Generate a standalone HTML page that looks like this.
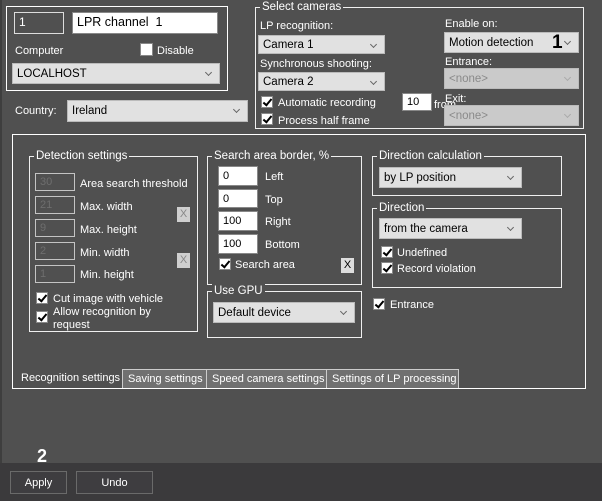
<!DOCTYPE html>
<html><head><meta charset="utf-8"><style>
*{box-sizing:border-box;margin:0;padding:0}
body{width:602px;height:501px;background:#505050;font-family:"Liberation Sans",Arial,sans-serif;font-size:11px;color:#fff;position:relative;overflow:hidden}
div{white-space:nowrap}
.a{position:absolute}
.t{margin-top:2px}
.box{position:absolute;border:1px solid #fff}
.grp{position:absolute;border:1px solid #f0f0f0}
.gt{position:absolute;top:-8px;left:4px;background:#505050;padding:0 2px;line-height:14px;color:#fff;font-size:11.5px}
.combo{position:absolute;background:#e1e1e1;color:#000;border:1px solid #bbb;padding-left:4px;line-height:20px;font-size:11.5px}
.combo:after{content:"";position:absolute;right:8px;top:6px;width:4px;height:4px;border-right:1px solid #666;border-bottom:1px solid #666;transform:rotate(45deg)}
.dis{background:#cacaca;color:#8a8a8a}
.dis:after{border-color:#aaa}
.inp{position:absolute;background:#fff;color:#000;border:1px solid #888;padding-left:4px;line-height:19px}
.dinp{position:absolute;border:1px solid #c4c4c4;color:#6e6e6e;padding-left:4px;line-height:16px}
.cb{position:absolute;width:12px;height:12px;background:#fff;border:1px solid #888}
.cb.k:after{content:"";position:absolute;left:3px;top:0px;width:3px;height:7px;border-right:2px solid #000;border-bottom:2px solid #000;transform:rotate(40deg)}
.xb{position:absolute;width:13px;height:15px;background:#cfcfcf;color:#888;font-size:11px;text-align:center;line-height:15px}
.tab{position:absolute;top:369px;height:19px;line-height:19px;padding:0 0 0 5px;border:1px solid #ccc;border-bottom:none;background:#707070;overflow:hidden}
.btn{position:absolute;top:471px;height:23px;border:1px solid #6a6a6a;background:#3e3d40;text-align:center;line-height:22px}
</style></head><body>
<div class="a" style="left:0;top:0;width:2px;height:463px;background:#3e3e3e"></div>
<div class="box" style="left:6px;top:6px;width:222px;height:85px"></div>
<div class="inp" style="left:14px;top:12px;width:50px;height:22px;background:#505050;color:#fff;border-color:#ddd;font-size:12px">1</div>
<div class="inp" style="left:72px;top:12px;width:146px;height:22px;font-size:12.5px">LPR channel&nbsp; 1</div>
<div class="a t" style="left:15px;top:43px">Computer</div>
<div class="cb" style="left:140px;top:43px;width:13px;height:13px"></div>
<div class="a t" style="left:157px;top:43px">Disable</div>
<div class="combo" style="left:12px;top:63px;width:208px;height:21px">LOCALHOST</div>
<div class="a t" style="left:15px;top:103px">Country:</div>
<div class="combo" style="left:67px;top:100px;width:181px;height:22px">Ireland</div>

<div class="grp" style="left:255px;top:7px;width:329px;height:122px"><div class="gt">Select cameras</div></div>
<div class="a t" style="left:260px;top:18px">LP recognition:</div>
<div class="combo" style="left:258px;top:35px;width:127px;height:19px;line-height:18px">Camera 1</div>
<div class="a t" style="left:260px;top:56px">Synchronous shooting:</div>
<div class="combo" style="left:258px;top:72px;width:127px;height:19px;line-height:18px">Camera 2</div>
<div class="cb k" style="left:261px;top:96px"></div>
<div class="a t" style="left:278px;top:95px">Automatic recording</div>
<div class="inp" style="left:402px;top:93px;width:30px;height:18px;line-height:17px">10</div>
<div class="a t" style="left:434px;top:97px">from</div>
<div class="cb k" style="left:261px;top:113px"></div>
<div class="a t" style="left:278px;top:113px">Process half frame</div>
<div class="a t" style="left:445px;top:16px">Enable on:</div>
<div class="combo" style="left:444px;top:32px;width:135px;height:21px">Motion detection</div>
<div class="a" style="left:552px;top:32px;font-size:19px;font-weight:bold;color:#000">1</div>
<div class="a t" style="left:445px;top:54px">Entrance:</div>
<div class="combo dis" style="left:444px;top:68px;width:135px;height:21px">&lt;none&gt;</div>
<div class="a t" style="left:445px;top:91px">Exit:</div>
<div class="combo dis" style="left:444px;top:105px;width:135px;height:21px">&lt;none&gt;</div>

<div class="box" style="left:12px;top:134px;width:574px;height:255px"></div>
<div class="grp" style="left:29px;top:156px;width:169px;height:176px"><div class="gt">Detection settings</div></div>
<div class="dinp" style="left:35px;top:173px;width:40px;height:18px">30</div><div class="a t" style="left:80px;top:176px">Area search threshold</div>
<div class="dinp" style="left:35px;top:196px;width:40px;height:18px">21</div><div class="a t" style="left:80px;top:199px">Max. width</div>
<div class="dinp" style="left:35px;top:219px;width:40px;height:18px">9</div><div class="a t" style="left:80px;top:222px">Max. height</div>
<div class="dinp" style="left:35px;top:242px;width:40px;height:18px">2</div><div class="a t" style="left:80px;top:245px">Min. width</div>
<div class="dinp" style="left:35px;top:265px;width:40px;height:18px">1</div><div class="a t" style="left:80px;top:267px">Min. height</div>
<div class="xb" style="left:177px;top:207px">X</div>
<div class="xb" style="left:177px;top:253px">X</div>
<div class="cb k" style="left:36px;top:292px"></div><div class="a t" style="left:53px;top:291px">Cut image with vehicle</div>
<div class="cb k" style="left:36px;top:311px"></div><div class="a t" style="left:53px;top:304px;line-height:13px">Allow recognition by<br>request</div>

<div class="grp" style="left:207px;top:156px;width:155px;height:129px"><div class="gt">Search area border, %</div></div>
<div class="inp" style="left:218px;top:166px;width:40px;height:20px">0</div><div class="a t" style="left:265px;top:169px">Left</div>
<div class="inp" style="left:218px;top:189px;width:40px;height:19px">0</div><div class="a t" style="left:265px;top:192px">Top</div>
<div class="inp" style="left:218px;top:211px;width:40px;height:20px">100</div><div class="a t" style="left:265px;top:214px">Right</div>
<div class="inp" style="left:218px;top:234px;width:40px;height:20px">100</div><div class="a t" style="left:265px;top:237px">Bottom</div>
<div class="cb k" style="left:219px;top:258px"></div><div class="a t" style="left:235px;top:257px">Search area</div>
<div class="xb" style="left:341px;top:258px;background:#ddd;color:#000">X</div>

<div class="grp" style="left:207px;top:291px;width:155px;height:47px"><div class="gt">Use GPU</div></div>
<div class="combo" style="left:213px;top:302px;width:142px;height:21px">Default device</div>

<div class="grp" style="left:372px;top:156px;width:190px;height:40px"><div class="gt">Direction calculation</div></div>
<div class="combo" style="left:379px;top:167px;width:143px;height:21px">by LP position</div>
<div class="grp" style="left:372px;top:208px;width:190px;height:80px"><div class="gt">Direction</div></div>
<div class="combo" style="left:379px;top:218px;width:143px;height:21px">from the camera</div>
<div class="cb k" style="left:381px;top:246px"></div><div class="a t" style="left:397px;top:245px">Undefined</div>
<div class="cb k" style="left:381px;top:262px"></div><div class="a t" style="left:397px;top:261px">Record violation</div>
<div class="cb k" style="left:373px;top:298px"></div><div class="a t" style="left:390px;top:297px">Entrance</div>

<div class="tab" style="left:14px;width:109px;background:#505050;border:none;padding-left:7px">Recognition settings</div>
<div class="tab" style="left:122px;width:85px">Saving settings</div>
<div class="tab" style="left:206px;width:121px">Speed camera settings</div>
<div class="tab" style="left:326px;width:133px">Settings of LP processing</div>

<div class="a" style="left:0;top:463px;width:602px;height:38px;background:#3b3a3c"></div>
<div class="a" style="left:37px;top:446px;font-size:18px;font-weight:bold">2</div>
<div class="btn" style="left:10px;width:57px">Apply</div>
<div class="btn" style="left:76px;width:77px">Undo</div>
</body></html>
